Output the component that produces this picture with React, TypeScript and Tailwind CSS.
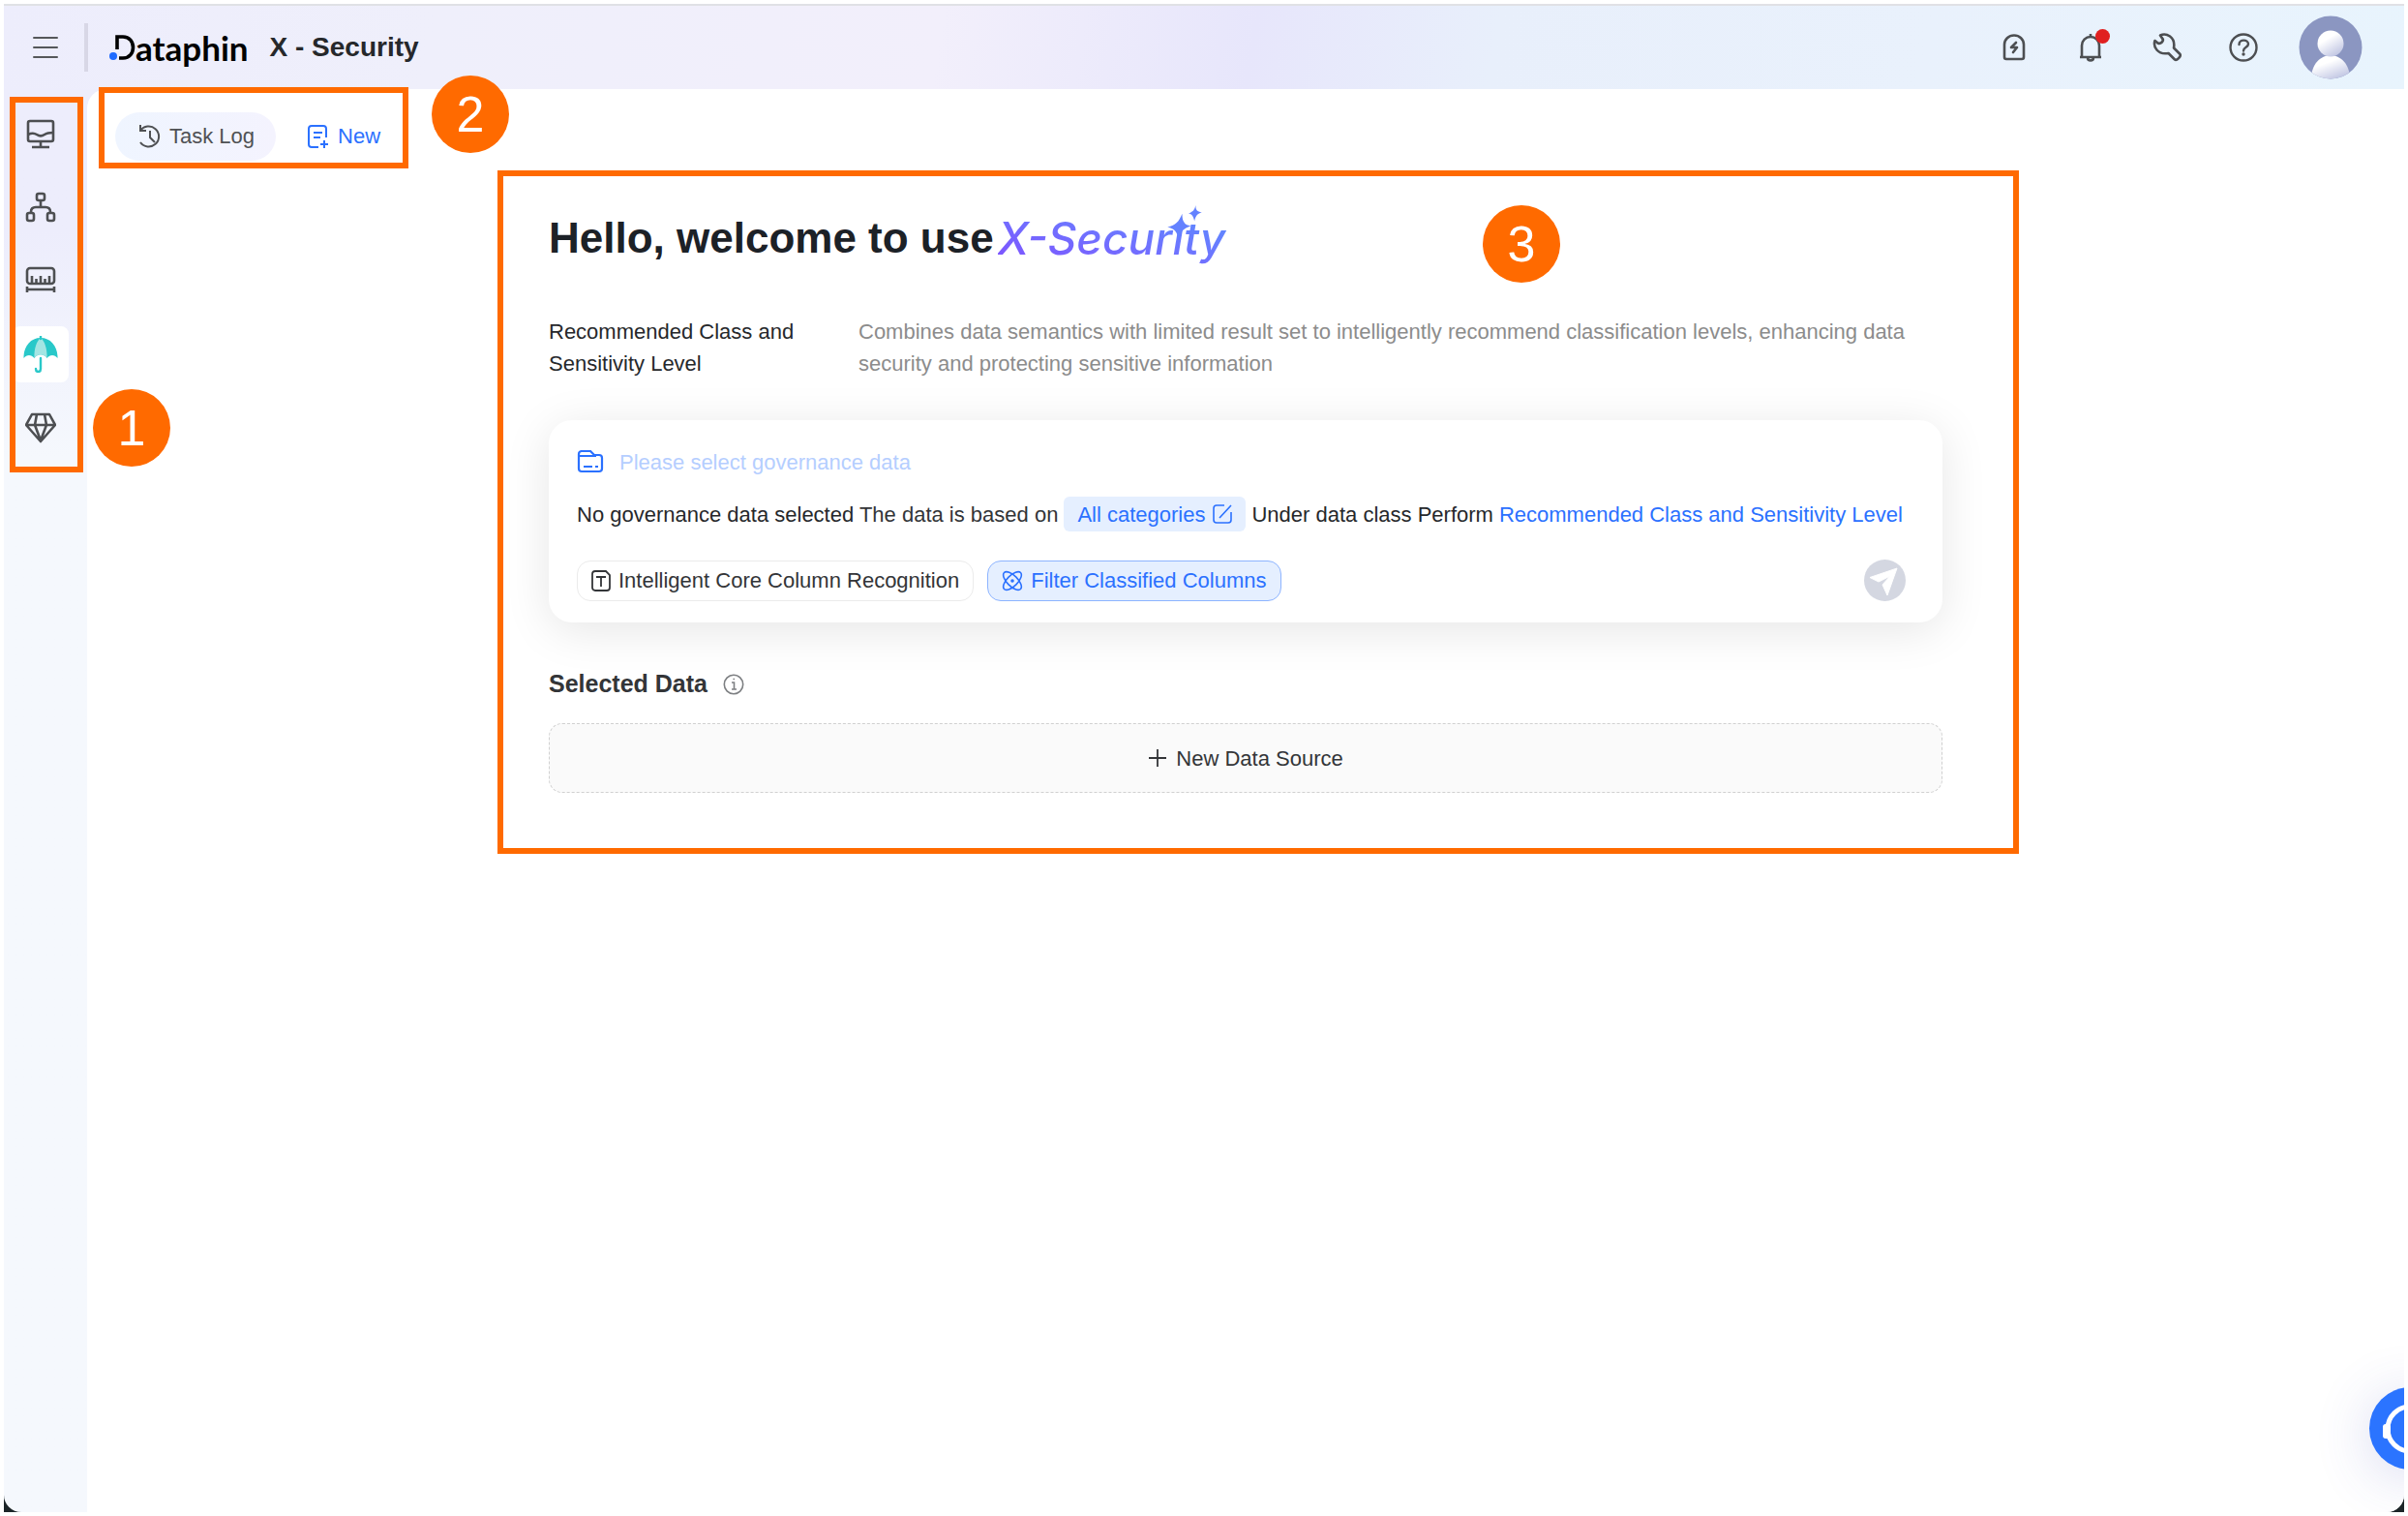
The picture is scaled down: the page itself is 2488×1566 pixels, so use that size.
import type { ReactNode } from "react";

const navItems = [
  {
    label: "Governance board",
    icon: (
      <>
        <rect x="3" y="3" width="26" height="21" rx="2" />
        <path d="M3 17c4-2 6-2 9 0s5 2 8 0 5-2 9-2M16 24v6M7 30h18" />
      </>
    ),
  },
  {
    label: "Architecture",
    icon: (
      <>
        <rect x="12" y="2" width="8" height="7" rx="2" />
        <rect x="2" y="22" width="7" height="8" rx="2" />
        <rect x="23" y="22" width="7" height="8" rx="2" />
        <path d="M16 9v7M6 21c0-3 1-5 5-5h10c4 0 5 2 5 5" />
      </>
    ),
  },
  {
    label: "Standards",
    icon: (
      <>
        <rect x="2" y="3" width="28" height="16" rx="3" />
        <path d="M7 18v-7M11.500 18v-4M16 18v-7M20.500 18v-4M25 18v-7M2 22v6M30 22v6M2 25h28" />
      </>
    ),
  },
];

function NavButton({ label, active, children }: { label: string; active?: boolean; children: ReactNode }) {
  return (
    <button
      aria-label={label}
      className={
        active
          ? "flex h-[58px] w-[58px] items-center justify-center rounded-lg bg-white"
          : "flex h-[58px] w-[58px] items-center justify-center rounded-lg"
      }
    >
      {children}
    </button>
  );
}

function Marker({ value, className }: { value: number; className: string }) {
  return (
    <span
      className={`absolute z-20 flex h-20 w-20 items-center justify-center rounded-full bg-[#ff6a00] text-[52px] leading-none text-white ${className}`}
    >
      {value}
    </span>
  );
}

function Frame({ className }: { className: string }) {
  return <span className={`pointer-events-none absolute z-10 border-[6px] border-[#ff6a00] ${className}`} />;
}

function Header() {
  return (
    <header className="flex h-[88px] shrink-0 items-center border-t-2 border-[#e0e1e5] bg-[linear-gradient(100deg,#ededfc_0%,#efeffb_18%,#f2effb_39%,#e7e6fb_52%,#e8effb_62%,#e9f1fc_80%,#e8f4fd_100%)] pr-[43px] pl-[30px] text-[#4d4f52]">
      <button aria-label="Menu" className="flex w-[26px] flex-col gap-2">
        <span className="h-[2px] rounded bg-[#55575a]" />
        <span className="h-[2px] rounded bg-[#55575a]" />
        <span className="h-[2px] rounded bg-[#55575a]" />
      </button>
      <span className="ml-[27px] h-[50px] w-1 bg-[#d8d7e6]" />
      <a href="#" aria-label="Dataphin" className="ml-[22px] flex items-center text-black">
        <svg width="27" height="28" viewBox="0 0 27 28" fill="none">
          <circle cx="4" cy="23" r="4" fill="#1f6bff" />
          <path d="M8 16V3h6c14 0 14 22 0 22h-4" stroke="#000" strokeWidth="3.600" />
        </svg>
        <span className="font-['Lato'] text-[35px] leading-9 font-bold">ataphin</span>
      </a>
      <h1 className="ml-[22px] text-[28px] leading-9 font-bold text-[#26282b]">X - Security</h1>
      <div className="ml-auto flex items-center gap-[49px]">
        <button aria-label="Activity">
          <svg width="30" height="30" viewBox="0 0 30 30" fill="none" stroke="currentColor" strokeWidth="2.600">
            <path d="M5 12a10 9.500 0 0 1 20 0v13a2 2 0 0 1-2 2H7a2 2 0 0 1-2-2z" />
            <path d="M17 10l-5 5h6l-4 5" strokeLinejoin="round" strokeLinecap="round" />
          </svg>
        </button>
        <button aria-label="Notifications" className="relative">
          <svg width="30" height="30" viewBox="0 0 30 30" fill="none" stroke="currentColor" strokeWidth="2.600">
            <path d="M6 25V13a9 9 0 0 1 18 0v12M4 25h22M15 1v4M12 25.500c0 4 6 4 6 0" />
          </svg>
          <span className="absolute -top-1 left-5 h-[15px] w-[15px] rounded-full bg-[#e02020]" />
        </button>
        <button aria-label="Tools">
          <svg width="30" height="30" viewBox="0 0 30 30" fill="none" stroke="currentColor" strokeWidth="2.600" strokeLinejoin="round">
            <path d="M8 2.500C14-.500 24 4 22 15.500l6.500 6.500c1.500 2-3.500 7-5.500 5.500L16.500 21C5 23 .500 14 2.500 8l3 2.500c3 1.500 7-2.500 4.500-5z" />
          </svg>
        </button>
        <button aria-label="Help">
          <svg width="30" height="30" viewBox="0 0 30 30" fill="none" stroke="currentColor" strokeWidth="2.400">
            <circle cx="15" cy="15" r="13.500" />
            <path d="M10.500 12c0-6 9.500-5.500 9.500-.500 0 3.500-5 3-5 7" strokeLinecap="round" />
            <circle cx="15" cy="22" r="1.700" fill="currentColor" stroke="none" />
          </svg>
        </button>
        <button aria-label="Account" className="-ml-[7px]">
          <svg width="66" height="66" viewBox="0 0 66 66">
            <defs>
              <clipPath id="avatar">
                <circle cx="33" cy="33" r="32.500" />
              </clipPath>
              <linearGradient id="body" x1="0" y1="0" x2="0.600" y2="1">
                <stop offset="0.400" stopColor="#fff" />
                <stop offset="1" stopColor="#c3c8e4" />
              </linearGradient>
            </defs>
            <circle cx="33" cy="33" r="32.500" fill="#8b96c1" />
            <g clipPath="url(#avatar)" fill="url(#body)">
              <path d="M13 66c0-33 40-33 40 0z" />
              <circle cx="33" cy="29" r="13.500" />
            </g>
          </svg>
        </button>
      </div>
    </header>
  );
}

function Sidebar() {
  return (
    <aside className="relative w-[86px] shrink-0">
      <Frame className="top-2 left-[6px] h-[388px] w-[76px]" />
      <Marker value={1} className="top-[310px] left-[92px]" />
      <nav className="ml-[9px] flex flex-col gap-[18px] pt-[17px] text-[#4d4f52]">
        {navItems.map((item) => (
          <NavButton key={item.label} label={item.label}>
            <svg width="32" height="32" viewBox="0 0 32 32" fill="none" stroke="currentColor" strokeWidth="2.600">
              {item.icon}
            </svg>
          </NavButton>
        ))}
        <NavButton label="X - Security" active>
          <svg width="36" height="38" viewBox="0 0 36 38" fill="none">
            <path d="M18 2C8 2 1 10 .500 21v2c3-4 8-4 11 0 3-5 10-5 13 0 3-4 8-4 11 0v-2C35 10 28 2 18 2z" fill="#29c8c9" />
            <path d="M18 2c-4 3-7 11-6.500 21 3-5 10-5 13 0C25 13 22 5 18 2z" fill="#a3e5e3" />
            <path d="M18 .500V3M18 23v11c0 4-5 4-5 0" stroke="#29c8c9" strokeWidth="2.400" strokeLinecap="round" />
          </svg>
        </NavButton>
        <NavButton label="Assets">
          <svg width="32" height="32" viewBox="0 0 32 32" fill="none" stroke="currentColor" strokeWidth="2.600" strokeLinejoin="round">
            <path d="M7 2h18l6 11-15 17L1 13zM1 13h30M12 2l-2 11 6 16 6-16-2-11" />
          </svg>
        </NavButton>
      </nav>
    </aside>
  );
}

function Toolbar() {
  return (
    <div className="relative ml-[29px] flex w-max items-center pt-6 leading-7">
      <Frame className="-top-[2px] -left-[17px] h-[84px] w-[320px]" />
      <Marker value={2} className="-top-[14px] left-[327px]" />
      <button className="flex h-[50px] items-center gap-2 rounded-full bg-linear-to-r from-[#eff5ff] to-[#f4f3fe] px-[22px] text-[#4f5154]">
        <svg width="26" height="26" viewBox="0 0 26 26" fill="none" stroke="currentColor" strokeWidth="2">
          <path d="M4 7a10.500 10.500 0 1 1 0 12M4 1v6h6M14 7v7l5 5" />
        </svg>
        Task Log
      </button>
      <button className="ml-8 flex h-[50px] items-center gap-2 text-[#2b71ff]">
        <svg width="24" height="26" viewBox="0 0 24 26" fill="none" stroke="currentColor" strokeWidth="2">
          <path d="M12 24H5a3 3 0 0 1-3-3V5a3 3 0 0 1 3-3h12a3 3 0 0 1 3 3v9M7 9h9M7 14h7M18 17v8M14 21h8" />
        </svg>
        New
      </button>
    </div>
  );
}

function PromptCard() {
  return (
    <div className="mt-[42px] rounded-3xl bg-white px-[29px] pt-[27px] pb-[22px] shadow-[0_8px_48px_rgba(0,0,0,0.100)]">
      <button className="flex h-8 items-center gap-4 text-[#b5ceff]">
        <svg width="28" height="24" viewBox="0 0 28 24" fill="none" stroke="#2b71ff" strokeWidth="2.200">
          <path d="M2 6V4a3 3 0 0 1 3-3h9l4 4h5a3 3 0 0 1 3 3v11a3 3 0 0 1-3 3H5a3 3 0 0 1-3-3zM2 6h18M7 17h9M19 17h3" />
        </svg>
        Please select governance data
      </button>
      <p className="mt-5 flex items-center gap-[6px] whitespace-nowrap text-[#26282b]">
        <span>
          No governance data selected <span className="text-[#333538]">The data is based on</span>
        </span>
        <button className="flex h-9 items-center gap-2 rounded-md bg-[#e5efff] px-[14px] text-[#2b71ff]">
          All categories
          <svg width="20" height="20" viewBox="0 0 20 20" fill="none" stroke="currentColor" strokeWidth="1.600">
            <path d="M12 1H4a3 3 0 0 0-3 3v12a3 3 0 0 0 3 3h12a3 3 0 0 0 3-3V8M7 14L19 1" />
          </svg>
        </button>
        <span>Under data class Perform</span>
        <a href="#" className="text-[#2b71ff]">
          Recommended Class and Sensitivity Level
        </a>
      </p>
      <div className="mt-[29px] flex items-center gap-[14px]">
        <button className="flex h-[42px] items-center gap-2 rounded-[14px] border border-[#ebebeb] px-[14px] text-[#333538]">
          <svg width="20" height="22" viewBox="0 0 20 22" fill="none" stroke="currentColor" strokeWidth="1.800">
            <path d="M4 1h11l4 4v13a3 3 0 0 1-3 3H4a3 3 0 0 1-3-3V4a3 3 0 0 1 3-3zM5 7h10M10 7v10" />
          </svg>
          Intelligent Core Column Recognition
        </button>
        <button className="flex h-[42px] items-center gap-2 rounded-[14px] border border-[#8db4ff] bg-[#e5efff] px-[14px] text-[#2b71ff]">
          <svg width="22" height="22" viewBox="0 0 22 22" fill="none" stroke="currentColor" strokeWidth="1.600">
            <ellipse cx="11" cy="11" rx="12" ry="5.500" transform="rotate(45 11 11)" />
            <ellipse cx="11" cy="11" rx="12" ry="5.500" transform="rotate(-45 11 11)" />
            <circle cx="11" cy="11" r="1" fill="currentColor" />
          </svg>
          Filter Classified Columns
        </button>
        <button aria-label="Send" className="mr-[9px] ml-auto">
          <svg width="43" height="43" viewBox="0 0 43 43">
            <circle cx="21.500" cy="21.500" r="21.500" fill="#d4d7e1" />
            <path d="M34 9L6 18.500l9 4.500L27 17l-8 9 5 11z" fill="#fff" stroke="#fff" strokeLinejoin="round" />
          </svg>
        </button>
      </div>
    </div>
  );
}

export default function App() {
  return (
    <div className="h-screen bg-white p-1 font-['Liberation_Sans',Arial,sans-serif] text-[22px] leading-[33px]">
      <div className="h-full bg-[#1c2528]">
        <div className="relative flex h-full flex-col overflow-hidden rounded-b-[18px] bg-linear-to-b from-[#ededfc] from-15% to-[#f5f8fd] to-30%">
          <Header />
          <div className="flex min-h-0 flex-1">
            <Sidebar />
            <main className="min-w-0 flex-1 rounded-tl-[20px] bg-white">
              <Toolbar />
              <section className="relative mx-auto mt-[10px] w-[1440px] max-w-full pt-10 pb-[63px]">
                <Frame className="inset-y-0 -right-[79px] -left-[53px]" />
                <Marker value={3} className="top-9 left-[965px]" />
                <h2 className="flex items-center gap-1 text-[44px] leading-[60px] font-bold text-[#1c2127]">
                  Hello, welcome to use
                  <span className="relative font-['Inter'] text-[46px] font-medium italic">
                    <span className="block bg-linear-to-tr from-[#7f4dff] to-[#5590ff] bg-clip-text pr-1 text-transparent">
                      X-Security
                    </span>
                    <svg className="absolute -top-1 right-7" width="36" height="38" viewBox="0 0 28 30" fill="#6482ff">
                      <path d="M12 7c0 7 2 9 7 10-6 2-8 4-10 11-1-6-3-9-9-10 7-2 9-4 12-11z" />
                      <path d="M23 0c0 4 1 5 5 6-4 1-5 3-6 7-1-4-2-6-5-6 4-2 5-3 6-7z" />
                    </svg>
                  </span>
                </h2>
                <div className="mt-[50px] flex">
                  <p className="w-[320px] shrink-0 pr-10 text-[#26282b]">Recommended Class and Sensitivity Level</p>
                  <p className="text-[#8c8c8c]">
                    Combines data semantics with limited result set to intelligently recommend classification levels, enhancing data
                    security and protecting sensitive information
                  </p>
                </div>
                <PromptCard />
                <div className="mt-[47px] flex items-center gap-4">
                  <h3 className="text-[25px] font-bold text-[#333538]">Selected Data</h3>
                  <button aria-label="About selected data">
                    <svg width="22" height="22" viewBox="0 0 22 22" fill="none" stroke="#7d7f82" strokeWidth="1.600">
                      <circle cx="11" cy="11" r="9.700" />
                      <path d="M9 9h2.500v7M9 16h5M10.500 5.500h1.500" />
                    </svg>
                  </button>
                </div>
                <button className="mt-6 flex h-[72px] w-full items-center justify-center gap-[9px] rounded-[14px] border border-dashed border-[#d0d0d0] bg-[#fafafa] text-[#333538]">
                  <svg width="20" height="20" viewBox="0 0 20 20" stroke="currentColor" strokeWidth="1.800">
                    <path d="M10 1v18M1 10h18" />
                  </svg>
                  New Data Source
                </button>
              </section>
            </main>
          </div>
          <button
            aria-label="Assistant"
            className="absolute -right-[49px] bottom-11 h-[85px] w-[85px] rounded-full bg-[#2b74ff] shadow-[0_8px_60px_rgba(60,70,180,0.200)]"
          >
            <svg width="85" height="85" viewBox="0 0 85 85" fill="none">
              <circle cx="42" cy="43" r="23" stroke="#fff" strokeWidth="5" />
              <rect x="14" y="38" width="8" height="15" rx="3" fill="#fff" />
            </svg>
          </button>
        </div>
      </div>
    </div>
  );
}
